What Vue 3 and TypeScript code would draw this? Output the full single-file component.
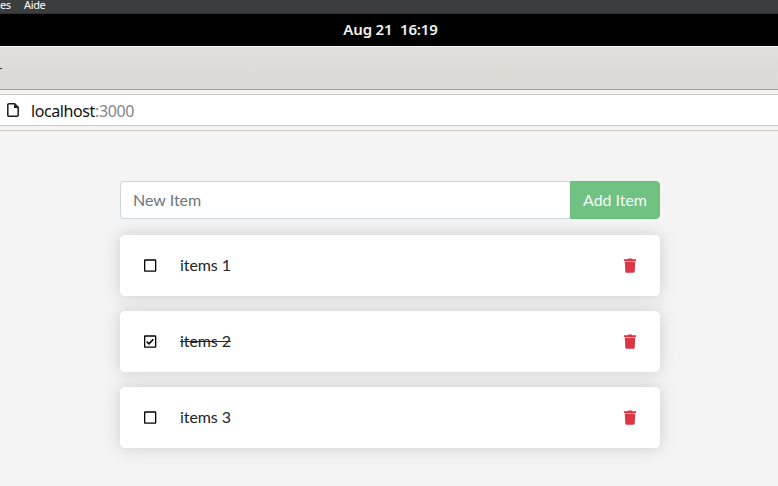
<script setup lang="ts">
import { ref } from 'vue'

interface TodoItem {
  id: number
  name: string
  completed: boolean
}

const newItem = ref('')
const items = ref<TodoItem[]>([
  { id: 1, name: 'items 1', completed: false },
  { id: 2, name: 'items 2', completed: true },
  { id: 3, name: 'items 3', completed: false },
])

function addItem() {
  const name = newItem.value.trim()
  if (!name) return
  items.value.push({ id: Date.now(), name, completed: false })
  newItem.value = ''
}

function removeItem(id: number) {
  items.value = items.value.filter((item) => item.id !== id)
}
</script>

<template>
  <div class="screen">
    <div class="menubar">
      <span class="menu-cut">es</span>
      <span>Aide</span>
    </div>
    <div class="topbar"><span class="clock">Aug 21&nbsp; 16:19</span></div>
    <div class="titlebar"><span class="tab-mark"></span></div>
    <div class="toolbar">
      <div class="address">
        <svg class="page-icon" viewBox="0 0 12 14">
          <path d="M2 .8H7.6L11.2 4.4V12.2Q11.2 13.2 10.2 13.2H1.8Q.8 13.2 .8 12.2V1.8Q.8 .8 2 .8Z" fill="#fff" stroke="#1c1c1c" stroke-width="1.5" />
          <path d="M7 1V5H11.2Z" fill="#1c1c1c" />
        </svg>
        <span class="url">localhost<span class="port">:3000</span></span>
      </div>
    </div>

    <main class="container">
      <form class="input-group" @submit.prevent="addItem">
        <input v-model="newItem" class="field" type="text" placeholder="New Item" aria-label="New Item" />
        <button class="add" type="submit">Add Item</button>
      </form>

      <div v-for="item in items" :key="item.id" class="item" :class="{ completed: item.completed }">
        <button class="toggle" type="button" @click="item.completed = !item.completed">
          <svg viewBox="0 0 14 15" width="14" height="15">
            <rect x="1.65" y="2" width="11" height="11.2" rx=".5" fill="none" stroke="#000" stroke-width="1.3" />
            <path v-if="item.completed" d="M3.7 7.6L6 9.8L10.4 5.2" fill="none" stroke="#000" stroke-width="1.6" />
          </svg>
        </button>
        <div class="name">{{ item.name }}</div>
        <button class="remove" type="button" @click="removeItem(item.id)">
          <svg viewBox="0 0 14 15" width="14" height="15">
            <path
              fill="#dc3545"
              d="M1.3 1.2H4.7L5.2 .4H8.8L9.3 1.2H12.7Q13.1 1.2 13.1 1.6V3H.9V1.6Q.9 1.2 1.3 1.2ZM1.8 4H12.2L11.7 13.5Q11.6 14.8 10.4 14.8H3.6Q2.4 14.8 2.3 13.5Z"
            />
            <path fill="#f0a3aa" d="M1.8 3H12.2V4H1.8Z" />
          </svg>
        </button>
      </div>
    </main>
  </div>
</template>

<style>
body {
  margin: 0;
  background: #f4f4f4;
}
</style>

<style scoped>
* {
  box-sizing: border-box;
}
.screen {
  height: 486px;
  overflow: hidden;
  background: #f4f4f4;
  font-family: Lato, 'Liberation Sans', sans-serif;
  font-size: 16px;
  color: #212529;
}
.menubar {
  display: flex;
  gap: 13px;
  height: 14px;
  background: #3c3d3e;
  border-bottom: 1px solid #303130;
  color: #fff;
  font: 11px/10px 'Noto Sans', sans-serif;
  letter-spacing: -0.35px;
}
.menu-cut {
  width: 11px;
}
.topbar {
  display: flex;
  align-items: center;
  justify-content: center;
  height: 32px;
  padding: 0 0 2px 3px;
  background: #000;
  color: #f2f2f2;
  font: 600 15px/20px 'Noto Sans', sans-serif;
  letter-spacing: -0.15px;
}
.titlebar {
  height: 44px;
  padding-top: 21px;
  border-top: 1px solid #f8f7f7;
  border-bottom: 1px solid #a19b98;
  background: linear-gradient(#e1dedb, #dcd8d4);
}
.tab-mark {
  display: block;
  width: 2px;
  height: 1px;
  background: #333;
}
.toolbar {
  height: 41px;
  padding: 4px 0;
  border-bottom: 1px solid #cec8c2;
  background: #f5f4f2;
}
.address {
  display: flex;
  align-items: center;
  height: 32px;
  padding-left: 7px;
  gap: 12px;
  border-top: 1px solid #cec8c2;
  border-bottom: 1px solid #cec8c2;
  background: #fff;
}
.page-icon {
  width: 12px;
  height: 14px;
}
.url {
  padding-top: 1px;
  color: #111;
  font: 16px/20px 'Noto Sans', sans-serif;
  letter-spacing: -0.4px;
}
.port {
  color: #858585;
}
.container {
  width: 540px;
  margin: 50px auto 0 120px;
}
.input-group {
  display: flex;
  height: 38px;
  margin-bottom: 16px;
}
.field {
  flex: 1;
  min-width: 0;
  padding: 6px 12px;
  border: 1px solid #ced4da;
  border-right: 0;
  border-radius: 4px 0 0 4px;
  outline: 0;
  background: #fff;
  color: #495057;
  font: 16px/24px Lato, sans-serif;
}
.field::placeholder {
  color: #6c757d;
  opacity: 1;
}
.add {
  width: 90px;
  padding: 0;
  border: 1px solid #69bd7c;
  border-radius: 0 4px 4px 0;
  background: #6fc282;
  color: #f5fbf6;
  font: 16px/24px Lato, sans-serif;
  letter-spacing: -0.04px;
}
.item {
  display: flex;
  align-items: center;
  height: 61px;
  margin-bottom: 15px;
  padding: 0 23px;
  border-radius: 5px;
  background: #fff;
  box-shadow: 0 0 1em #ccc;
}
.toggle,
.remove {
  display: flex;
  flex: none;
  padding: 0;
  border: 0;
  background: none;
}
.name {
  flex: 1;
  padding: 0 0 1px 23px;
  line-height: 24px;
  letter-spacing: -0.08px;
}
.completed .name {
  text-decoration: line-through;
}
</style>
